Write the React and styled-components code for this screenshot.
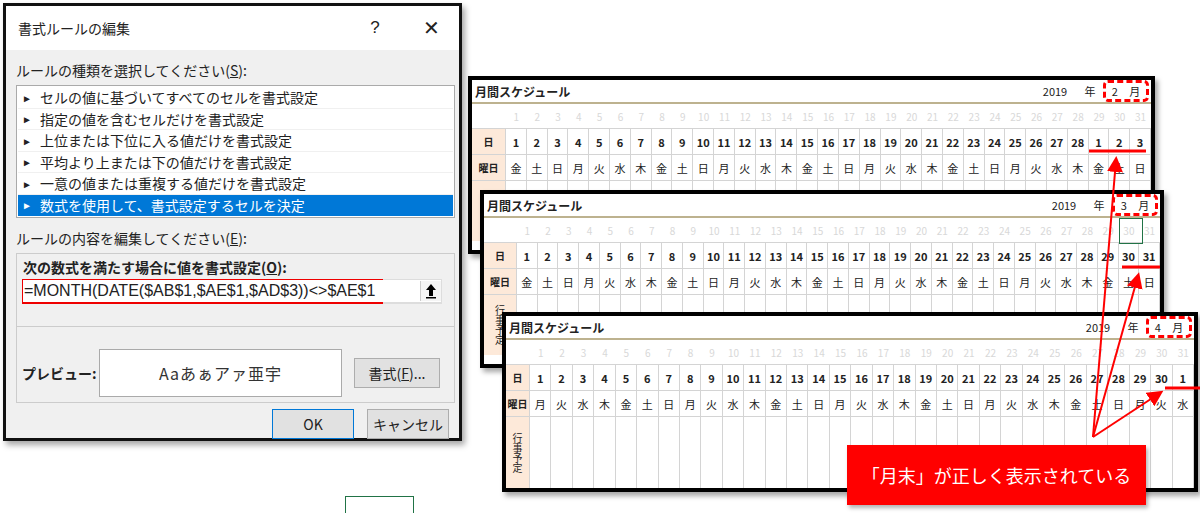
import React from 'react';
import styled, { createGlobalStyle } from 'styled-components';

const Global = createGlobalStyle`
  html, body { margin: 0; padding: 0; background: #fff; }
  body { font-family: "Noto Sans CJK JP", "Noto Sans", sans-serif; }
`;

const Canvas = styled.div`
  position: relative;
  width: 1200px;
  height: 513px;
  overflow: hidden;
  background: #fff;
`;

/* ---------- dialog ---------- */
const Dialog = styled.div`
  position: absolute;
  left: 3px;
  top: 3px;
  width: 453px;
  height: 432px;
  border: 3px solid #111;
  background: #f0f0f0;
  box-shadow: 3px 4px 6px rgba(0,0,0,0.35);
  display: flex;
  flex-direction: column;
  color: #222;
  font-size: 14px;
`;

const TitleBar = styled.div`
  height: 44px;
  flex-shrink: 0;
  background: #fff;
  display: flex;
  align-items: center;
  padding-left: 12px;
  font-size: 14px;
`;

const TitleText = styled.span` flex: 1; `;

const TitleIcon = styled.span`
  width: 56px;
  text-align: center;
  font-size: ${p => p.$size || 16}px;
  font-family: "Liberation Sans", sans-serif;
`;

const Body = styled.div`
  padding: 10px 0 0 10px;
  display: flex;
  flex-direction: column;
`;

const Label = styled.div`
  font-size: 14px;
  margin-bottom: 5px;
  & u { text-decoration: underline; }
`;

const ListBox = styled.div`
  width: 435px;
  background: #fff;
  border: 1px solid #aaa;
  padding: 1px;
  margin-bottom: 10px;
`;

const ListRow = styled.div`
  height: 20.5px;
  display: flex;
  align-items: center;
  padding-left: 4px;
  font-size: 14px;
  background: ${p => (p.$sel ? '#0078d7' : '#fff')};
  color: ${p => (p.$sel ? '#fff' : '#222')};
  border-bottom: 1px solid ${p => (p.$sel ? '#0078d7' : '#f0f0f0')};
  & b { font-size: 10px; margin-right: 8px; font-weight: normal; }
`;

const EditPanel = styled.div`
  width: 437px;
  height: 148px;
  border: 1px solid #ccc;
  background: #f0f0f0;
  display: flex;
  flex-direction: column;
`;

const BoldLabel = styled.div`
  font-weight: bold;
  font-size: 14px;
  padding: 3px 0 2px 6px;
`;

const FormulaRow = styled.div`
  margin-left: 5px;
  width: 418px;
  height: 22px;
  background: #fff;
  border: 1px solid #ddd;
  display: flex;
  align-items: center;
  border-bottom: 2px solid #e00;
  border-image: linear-gradient(to right, #e00 0 86%, #ddd 86% 100%) 1;
`;

const Formula = styled.div`
  flex: 1;
  font-family: "Liberation Sans", "Noto Sans", sans-serif;
  font-size: 16px;
  padding-left: 1px;
`;

const UpBtn = styled.div`
  width: 20px;
  height: 20px;
  border-left: 1px solid #ccc;
  background: #f5f5f5;
  display: flex;
  align-items: center;
  justify-content: center;
`;

const Sep = styled.div`
  margin-top: 22px;
  border-top: 1px solid #ccc;
`;

const PreviewRow = styled.div`
  display: flex;
  align-items: center;
  margin-top: 22px;
  padding-left: 5px;
`;

const PreviewLabel = styled.div`
  width: 77px;
  font-weight: bold;
  font-size: 14px;
`;

const PreviewBox = styled.div`
  width: 241px;
  height: 46px;
  background: #fff;
  border: 1px solid #aaa;
  display: flex;
  align-items: center;
  justify-content: center;
  font-size: 16px;
  letter-spacing: 1px;
  color: #333;
`;

const Btn = styled.div`
  width: ${p => p.$w}px;
  height: 28px;
  background: #e1e1e1;
  border: 1px solid ${p => (p.$primary ? '#0078d7' : '#adadad')};
  display: flex;
  align-items: center;
  justify-content: center;
  font-size: 14px;
  color: #222;
`;

const FormatBtn = styled(Btn)`
  margin-left: 12px;
`;

const ButtonRow = styled.div`
  display: flex;
  justify-content: flex-end;
  gap: 13px;
  padding: 6px 10px 0 0;
`;

/* ---------- sheets ---------- */
const Sheet = styled.div`
  position: absolute;
  left: ${p => p.$x}px;
  top: ${p => p.$y}px;
  width: ${p => p.$w}px;
  height: ${p => p.$h}px;
  border: 4px solid #000;
  background: #fff;
  box-shadow: 3px 4px 5px rgba(0,0,0,0.35);
  z-index: ${p => p.$z};
  overflow: hidden;
  font-family: "Noto Sans CJK JP", sans-serif;
  font-size: 11px;
  color: #222;
`;

const SheetHead = styled.div`
  height: 22px;
  display: flex;
  align-items: center;
  border-bottom: 2px solid #bdb28f;
  padding-left: 3px;
`;

const SheetTitle = styled.span`
  flex: 1;
  font-weight: bold;
  font-size: 12px;
`;

const YearText = styled.span`
  width: ${p => p.$w}px;
  text-align: center;
`;

const MonthBox = styled.span`
  width: 40px;
  height: 16px;
  border: 3px dashed #f00;
  border-radius: 5px;
  display: flex;
  align-items: center;
  justify-content: space-around;
  margin-right: 2px;
`;

const Grid = styled.div`
  display: grid;
  grid-template-columns: ${p => p.$hw}px repeat(31, 1fr);
`;

const Faded = styled.div`
  height: 24px;
  display: flex;
  align-items: center;
  justify-content: center;
  color: #d8d8d8;
  font-size: 10px;
`;

const Cell = styled.div`
  height: ${p => p.$h || 25}px;
  display: flex;
  align-items: center;
  justify-content: center;
  white-space: nowrap;
  border-right: 1px solid #d4d4d4;
  border-top: 1px solid #d4d4d4;
  background: ${p => (p.$head ? '#fde9d9' : '#fff')};
  font-weight: ${p => (p.$bold ? 'bold' : 'normal')};
  font-size: ${p => (p.$head ? 10 : 11)}px;
  writing-mode: ${p => (p.$vert ? 'vertical-rl' : 'horizontal-tb')};
`;

const Callout = styled.div`
  position: absolute;
  left: 847px;
  top: 445px;
  width: 299px;
  height: 60px;
  background: #f00;
  color: #fff;
  font-size: 18px;
  display: flex;
  align-items: center;
  justify-content: center;
  z-index: 10;
  box-shadow: 2px 3px 4px rgba(0,0,0,0.3);
`;

const Overlay = styled.svg`
  position: absolute;
  left: 0;
  top: 0;
  z-index: 11;
  pointer-events: none;
`;

const GreenBox = styled.div`
  position: absolute;
  left: ${p => p.$x}px;
  top: ${p => p.$y}px;
  width: ${p => p.$w}px;
  height: ${p => p.$h}px;
  border: 1px solid #217346;
  z-index: ${p => p.$z || 1};
`;

const WD = ['日', '月', '火', '水', '木', '金', '土'];

function ScheduleSheet({ x, y, w, h, z, hw, month, days, startDow, bodyH }) {
  const nums = Array.from({ length: 31 }, (_, i) => i + 1);
  return (
    <Sheet $x={x} $y={y} $w={w} $h={h} $z={z}>
      <SheetHead>
        <SheetTitle>月間スケジュール</SheetTitle>
        <YearText $w={44}>2019</YearText>
        <YearText $w={26}>年</YearText>
        <MonthBox><span>{month}</span><span>月</span></MonthBox>
      </SheetHead>
      <Grid $hw={hw}>
        <Faded />
        {nums.map(n => <Faded key={n}>{n}</Faded>)}
        <Cell $head $bold>日</Cell>
        {days.map((d, i) => <Cell key={i} $bold>{d}</Cell>)}
        <Cell $head $bold>曜日</Cell>
        {days.map((d, i) => <Cell key={i}>{WD[(startDow + i) % 7]}</Cell>)}
        <Cell $head $h={bodyH} $vert>行事予定</Cell>
        {days.map((d, i) => <Cell key={i} $h={bodyH} />)}
      </Grid>
    </Sheet>
  );
}

const range = (a, b) => Array.from({ length: b - a + 1 }, (_, i) => a + i);

const rules = [
  'セルの値に基づいてすべてのセルを書式設定',
  '指定の値を含むセルだけを書式設定',
  '上位または下位に入る値だけを書式設定',
  '平均より上または下の値だけを書式設定',
  '一意の値または重複する値だけを書式設定',
  '数式を使用して、書式設定するセルを決定',
];

function Arrow({ x1, y1, x2, y2 }) {
  return <line x1={x1} y1={y1} x2={x2} y2={y2} stroke="#f00" strokeWidth="2" markerEnd="url(#ah)" />;
}

export default function App() {
  return (
    <Canvas>
      <Global />
      <Dialog>
        <TitleBar>
          <TitleText>書式ルールの編集</TitleText>
          <TitleIcon $size={17}>?</TitleIcon>
          <TitleIcon $size={20}>✕</TitleIcon>
        </TitleBar>
        <Body>
          <Label>ルールの種類を選択してください(<u>S</u>):</Label>
          <ListBox>
            {rules.map((r, i) => (
              <ListRow key={r} $sel={i === 5}><b>►</b>{r}</ListRow>
            ))}
          </ListBox>
          <Label>ルールの内容を編集してください(<u>E</u>):</Label>
          <EditPanel>
            <BoldLabel>次の数式を満たす場合に値を書式設定(<u>O</u>):</BoldLabel>
            <FormulaRow>
              <Formula>=MONTH(DATE($AB$1,$AE$1,$AD$3))&lt;&gt;$AE$1</Formula>
              <UpBtn>
                <svg width="12" height="16" viewBox="0 0 12 16">
                  <path d="M6 1 L1 7 H4 V13 H8 V7 H11 Z" fill="#000" />
                  <rect x="1" y="14" width="10" height="1.5" fill="#000" />
                </svg>
              </UpBtn>
            </FormulaRow>
            <Sep />
            <PreviewRow>
              <PreviewLabel>プレビュー:</PreviewLabel>
              <PreviewBox>Aaあぁアァ亜宇</PreviewBox>
              <FormatBtn $w={84}>書式(<u>F</u>)...</FormatBtn>
            </PreviewRow>
          </EditPanel>
          <ButtonRow>
            <Btn $w={80} $primary>OK</Btn>
            <Btn $w={80}>キャンセル</Btn>
          </ButtonRow>
        </Body>
      </Dialog>

      <GreenBox $x={345} $y={496} $w={67} $h={30} />

      <ScheduleSheet x={468} y={76} w={679} h={170} z={2} hw={34} month={2}
        days={[...range(1, 28), 1, 2, 3]} startDow={5} bodyH={60} />
      <ScheduleSheet x={480} y={190} w={676} h={170} z={3} hw={33} month={3}
        days={range(1, 31)} startDow={5} bodyH={60} />
      <GreenBox $x={1119} $y={218} $w={22} $h={24} $z={4} />
      <ScheduleSheet x={502} y={312} w={688} h={172} z={5} hw={24} month={4}
        days={[...range(1, 30), 1]} startDow={1} bodyH={72} />

      <Callout>「月末」が正しく表示されている</Callout>

      <Overlay width="1200" height="513">
        <defs>
          <marker id="ah" markerWidth="8" markerHeight="8" refX="6" refY="4" orient="auto">
            <path d="M0 0 L8 4 L0 8 Z" fill="#f00" />
          </marker>
        </defs>
        <line x1="1089" y1="151" x2="1146" y2="151" stroke="#f00" strokeWidth="3" />
        <line x1="1122" y1="267" x2="1160" y2="267" stroke="#f00" strokeWidth="3" />
        <line x1="1165" y1="388" x2="1200" y2="388" stroke="#f00" strokeWidth="3" />
        <Arrow x1={1093} y1={437} x2={1116} y2={160} />
        <Arrow x1={1093} y1={437} x2={1138} y2={276} />
        <Arrow x1={1093} y1={437} x2={1160} y2={393} />
      </Overlay>
    </Canvas>
  );
}
